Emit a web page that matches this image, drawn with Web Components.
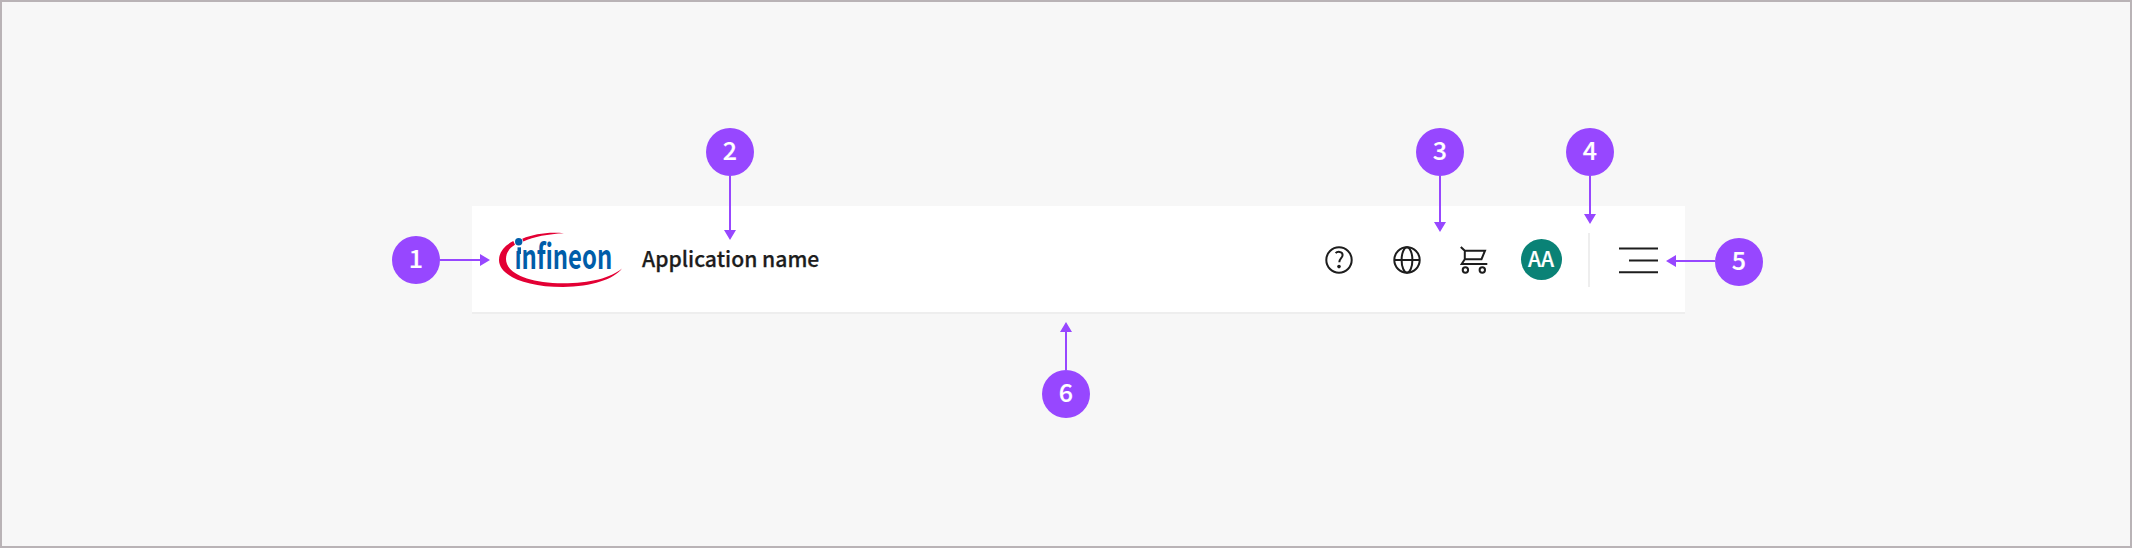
<!DOCTYPE html>
<html lang="en"><head><meta charset="utf-8"><title>Header anatomy</title>
<style>body{margin:0;font-family:"Noto Sans CJK SC","Open Sans",sans-serif}</style></head><body>
<anatomy-board></anatomy-board>
<script>
const define=(name,html,setup)=>customElements.define(name,class extends HTMLElement{
  connectedCallback(){ if(this.shadowRoot)return; this.attachShadow({mode:'open'}).innerHTML=html; if(setup)setup(this,this.shadowRoot); }
});

define('brand-logo',`<style>:host{display:block;width:124px;height:58px}svg{display:block;overflow:visible}</style>
<svg width="124" height="58" viewBox="498 231 124 58">
<path fill="#e30034" d="M564 233.3C548 231.8 534 234 522.3 238.8L523.3 241.6C534 236.8 548 234 564 233.3ZM513.3 241C504 246 499 252 499 260C499 275 524 287 563 287C592 287 614 279 622 268.6C611 278 590 283.3 563 283.3C528 283.3 506 273 506 259C506 253 509 248.5 515 244.8Z"/>
<circle cx="518.7" cy="241.7" r="3.7" fill="#005da9"/>
<path fill="#005da9" d="M517.5 247.3H521V254H517.5Z"/>
<text x="514.8" y="268.6" font-family="Noto Sans CJK SC,sans-serif" font-weight="700" font-size="34" fill="#005da9" textLength="97.4" lengthAdjust="spacingAndGlyphs">ınfineon</text>
</svg>`);

define('tool-icon',`<style>:host{display:block;width:28px;height:28px}svg{display:block;fill:none;stroke:#1d1d1d;stroke-width:2}</style><svg width="28" height="28" viewBox="0 0 28 28"></svg>`,(el,r)=>{
 const shapes={
  help:'<circle cx="14" cy="14" r="12.7"/><path d="M10.6 7.1C12 5.5 17.6 4.9 17.6 8.9C17.6 12 14.3 12.3 14.3 16.3"/><circle cx="14" cy="20.6" r="1.8" fill="#1d1d1d" stroke="none"/>',
  globe:'<circle cx="14" cy="14" r="12.7"/><ellipse cx="14" cy="14" rx="5.4" ry="12.7"/><path d="M1 14H27"/>',
  cart:'<path d="M.8 1L4.8 4.8V13.2L1.7 18H27.3M4.8 4.7H25L21.5 13.2H4.8"/><circle cx="5.4" cy="24" r="2.7"/><circle cx="22.3" cy="24" r="2.7"/>'};
 r.querySelector('svg').innerHTML=shapes[el.getAttribute('name')];
});

define('user-avatar',`<style>:host{display:flex;align-items:center;justify-content:center;box-sizing:border-box;padding-bottom:3px;width:41px;height:41px;border-radius:50%;background:#0a8276;color:#fff;font-size:21px;font-weight:500;line-height:1;-webkit-text-stroke:.2px}</style><slot></slot>`);
define('menu-button',`<style>:host{display:block}svg{display:block}</style><svg width="39" height="28" viewBox="0 0 39 28"><path d="M0 2.6H39M10 14.4H39M0 26.3H39" stroke="#1d1d1d" stroke-width="2"/></svg>`);

define('app-header',`<style>
:host{display:flex;box-sizing:border-box;width:1212.5px;height:108px;background:#fff;border-bottom:2px solid #eee;align-items:center;padding:1.5px 26.5px 0 26px}
.name{margin:-4.5px 0 0 20px;font-size:21.15px;font-weight:500;color:#1d1d1d;white-space:nowrap;line-height:30px;-webkit-text-stroke:.25px}
.tools{margin-left:auto;display:flex;align-items:center}
tool-icon{margin-right:39.3px}tool-icon[name=cart]{margin-right:32.6px}
.line{width:1.5px;height:54px;background:#eee;margin:0 29.3px 0 26.7px}
</style><brand-logo></brand-logo><div class="name">Application name</div><div class="tools"><tool-icon name="help"></tool-icon><tool-icon name="globe"></tool-icon><tool-icon name="cart"></tool-icon><user-avatar>AA</user-avatar><div class="line"></div><menu-button></menu-button></div>`);

/* A numbered pin with an arrow; "to" sets the direction, "length" the arrow length. */
define('callout-pin',`<style>
:host{position:absolute;display:flex;align-items:center}
:host([to=down]){flex-direction:column}:host([to=up]){flex-direction:column-reverse}:host([to=left]){flex-direction:row-reverse}
.dot{box-sizing:border-box;padding-bottom:5px;width:48px;height:48px;border-radius:50%;background:#9747ff;color:#fff;display:flex;align-items:center;justify-content:center;font-size:25px;font-weight:500;line-height:1;-webkit-text-stroke:.2px}
svg{display:block;fill:#9747ff}
</style><div class="dot"><slot></slot></div>`,(el,r)=>{
 const to=el.getAttribute('to'),n=+el.getAttribute('length'),v=to==='down'||to==='up';
 const d={right:`M0 5H${n-10}V0L${n} 6L${n-10} 12V7H0Z`,left:`M${n} 5H10V0L0 6L10 12V7H${n}Z`,down:`M5 0V${n-10}H0L6 ${n}L12 ${n-10}H7V0Z`,up:`M5 ${n}V10H0L6 0L12 10H7V${n}Z`}[to];
 const start=to==='left'?' style="margin-bottom:2px"':'';
 r.querySelector('.dot').insertAdjacentHTML('afterend',`<svg width="${v?12:n}" height="${v?n:12}"${start}><path d="${d}"/></svg>`);
 el.style.left=el.getAttribute('x')+'px';el.style.top=el.getAttribute('y')+'px';
});

define('anatomy-board',`<style>
:host{display:flex;box-sizing:border-box;position:relative;width:2132px;height:548px;background:#f7f7f7;border:2px solid #b9b3b6;padding:204px 0 0 470px;align-items:flex-start}
</style><app-header></app-header>
<callout-pin to="right" length="50" x="390" y="234">1</callout-pin>
<callout-pin to="down" length="64" x="704" y="126">2</callout-pin>
<callout-pin to="down" length="56" x="1414" y="126">3</callout-pin>
<callout-pin to="down" length="48" x="1564" y="126">4</callout-pin>
<callout-pin to="left" length="49" x="1664" y="236">5</callout-pin>
<callout-pin to="up" length="48" x="1040" y="320">6</callout-pin>`);
</script></body></html>
